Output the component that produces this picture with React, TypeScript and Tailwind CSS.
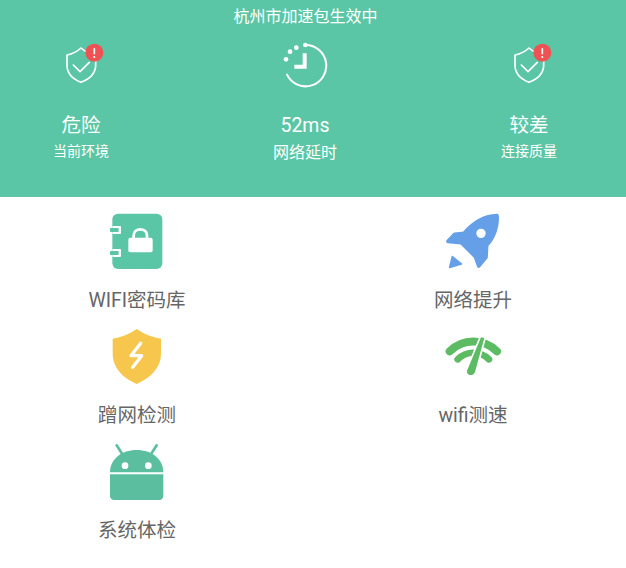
const GREEN = '#5bc6a5'

/** Shield with a check and red alert badge, drawn in 3x reference coordinates. */
function AlertShield() {
  return (
    <svg width="64" height="48" viewBox="147 120 192 144" fill="none">
      <path
        d="M243 144 C230 156 216 162 201 165 L201 195 C201 222 220 238 243 247 C266 238 287 222 287 195 L287 165 C272 162 256 156 243 144 Z"
        stroke="#fff"
        strokeWidth="5"
        strokeLinejoin="round"
      />
      <path d="M220 195 L240 215 L268 187" stroke="#fff" strokeWidth="5" strokeLinecap="round" strokeLinejoin="round" />
      <circle cx="283" cy="158" r="27" fill="#ee5253" />
      <rect x="280.5" y="144" width="5" height="19" rx="2" fill="#fff" />
      <circle cx="283" cy="171" r="3" fill="#fff" />
    </svg>
  )
}

function ClockIcon() {
  return (
    <svg width="64" height="48" viewBox="819 120 192 144" fill="none">
      <path d="M917 135 A62 62 0 1 1 861 224" stroke="#fff" strokeWidth="6" strokeLinecap="round" />
      <circle cx="916" cy="135" r="7" fill="#fff" />
      <circle cx="889" cy="143" r="7" fill="#fff" />
      <circle cx="870" cy="155" r="7" fill="#fff" />
      <circle cx="858" cy="178" r="7" fill="#fff" />
      <path d="M914 160 L914 200 L883 200" stroke="#fff" strokeWidth="12" />
    </svg>
  )
}

function Stat({ icon, value, label, labelClass }: { icon: React.ReactNode; value: string; label: string; labelClass: string }) {
  return (
    <div className="flex w-[112px] flex-col items-center text-white">
      {icon}
      <div className="mt-[24px] text-[19.5px] leading-7">{value}</div>
      <div className={labelClass}>{label}</div>
    </div>
  )
}

function NotebookIcon() {
  return (
    <svg width="100" height="62" viewBox="21 33 300 186" fill="none">
      <rect x="97" y="41" width="150" height="166" rx="17" fill="#5bc6a5" />
      <rect x="97" y="78" width="26" height="24" rx="3" fill="#fff" />
      <rect x="97" y="147" width="26" height="24" rx="3" fill="#fff" />
      <rect x="90" y="84" width="26" height="12" rx="2" fill="#5bc6a5" />
      <rect x="90" y="153" width="26" height="12" rx="2" fill="#5bc6a5" />
      <rect x="145" y="113" width="73" height="44" rx="6" fill="#fff" />
      <path d="M161 115 L161 106 C161 82 201 82 201 106 L201 115" stroke="#fff" strokeWidth="8" />
    </svg>
  )
}

function RocketIcon() {
  return (
    <svg width="100" height="62" viewBox="9 33 300 186" fill="none">
      <path
        d="M231 47 C200 48 165 62 132 100 L104 103 L84 124 L124 128 L166 170 L176 198 L198 172 L200 136 C222 112 234 78 231 47 Z"
        fill="#659fe8"
        stroke="#659fe8"
        strokeWidth="11"
        strokeLinejoin="round"
      />
      <circle cx="183" cy="100" r="14" fill="#fff" />
      <path d="M97 170 L124 192 L89 202 Z" fill="#659fe8" stroke="#659fe8" strokeWidth="5" strokeLinejoin="round" />
    </svg>
  )
}

function YellowShieldIcon() {
  return (
    <svg width="100" height="62" viewBox="-9 18 300 186" fill="none">
      <path
        d="M140 27 C118 42 95 52 68 56 L68 100 C68 145 100 175 140 192 C180 175 213 145 213 100 L213 56 C186 52 162 42 140 27 Z"
        fill="#f7c64c"
      />
      <path d="M152 70 L123 107 L155 107 L128 142" stroke="#fff" strokeWidth="10" strokeLinecap="round" strokeLinejoin="round" />
    </svg>
  )
}

function SignalIcon() {
  return (
    <svg width="100" height="62" viewBox="9 18 300 186" fill="none">
      <path d="M89 94 A100 100 0 0 1 231 94" stroke="#5dbb63" strokeWidth="24" strokeLinecap="round" />
      <path d="M113 118 A66 66 0 0 1 207 118" stroke="#5dbb63" strokeWidth="20" strokeLinecap="round" />
      <path
        d="M183 52 L193 54 L165 156 C161 170 139 168 141 152 Z"
        fill="#5dbb63"
        stroke="#fff"
        strokeWidth="10"
        strokeLinejoin="round"
        paintOrder="stroke"
      />
    </svg>
  )
}

function AndroidIcon() {
  return (
    <svg width="100" height="62" viewBox="-9 18 300 186" fill="none">
      <path d="M80 31 L100 62" stroke="#5bbf9f" strokeWidth="8" strokeLinecap="round" />
      <path d="M200 31 L180 62" stroke="#5bbf9f" strokeWidth="8" strokeLinecap="round" />
      <path d="M60 112 C60 72 95 45 140 45 C185 45 220 72 220 112 Z" fill="#5bbf9f" />
      <path d="M60 118 L220 118 L220 183 C220 190 215 195 208 195 L72 195 C65 195 60 190 60 183 Z" fill="#5bbf9f" />
      <circle cx="105" cy="92" r="10" fill="#fff" />
      <circle cx="175" cy="92" r="10" fill="#fff" />
    </svg>
  )
}

function Tool({ icon, label }: { icon: React.ReactNode; label: string }) {
  return (
    <div className="flex flex-col items-center">
      {icon}
      <div className="mt-[14px] text-[19.5px] leading-7 text-[#666]">{label}</div>
    </div>
  )
}

export default function App() {
  return (
    <div className="min-h-[568px] bg-white font-['Roboto','Noto_Sans_CJK_SC',sans-serif]">
      {/* Status header */}
      <section className="h-[197px] pt-[5px]" style={{ backgroundColor: GREEN }}>
        <div className="pr-[15px] text-center text-[16px] leading-6 text-white">杭州市加速包生效中</div>
        <div className="mt-[11px] flex gap-[112px] pl-[25px]">
          <Stat icon={<AlertShield />} value="危险" label="当前环境" labelClass="-mt-px text-[14px] leading-6" />
          <Stat icon={<ClockIcon />} value="52ms" label="网络延时" labelClass="mt-px text-[16px] leading-6" />
          <Stat icon={<AlertShield />} value="较差" label="连接质量" labelClass="-mt-px text-[14px] leading-6" />
        </div>
      </section>

      {/* Tool grid */}
      <section className="grid grid-cols-[274px_274px] auto-rows-[115px] gap-x-[62px] pt-[14px]">
        <Tool icon={<NotebookIcon />} label="WIFI密码库" />
        <Tool icon={<RocketIcon />} label="网络提升" />
        <Tool icon={<YellowShieldIcon />} label="蹭网检测" />
        <Tool icon={<SignalIcon />} label="wifi测速" />
        <Tool icon={<AndroidIcon />} label="系统体检" />
      </section>
    </div>
  )
}
